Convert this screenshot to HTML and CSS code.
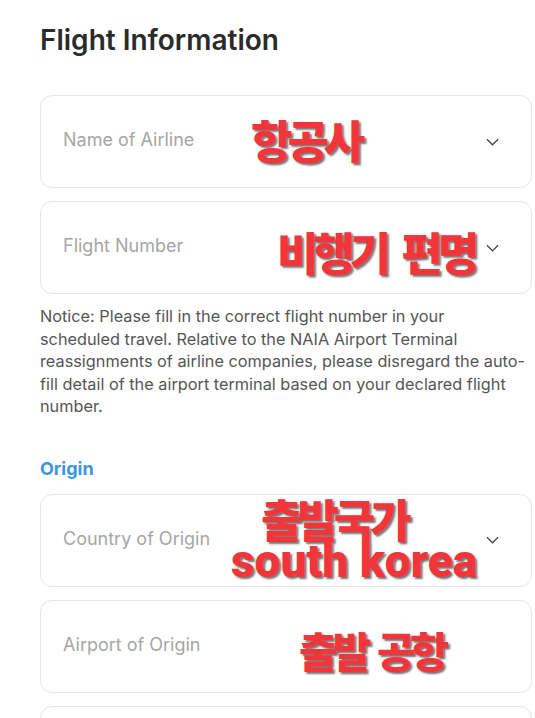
FILE: index.html
```html
<!DOCTYPE html>
<html lang="en">
<head>
    <meta charset="UTF-8">
    <meta name="viewport" content="width=device-width, initial-scale=1.0">
    <title>Flight Information</title>
    <link rel="stylesheet" href="styles.css">
</head>
<body>

    <div class="page">
        <h1 class="page-title">Flight Information</h1>

        <div class="field select">
            <span class="placeholder">Name of Airline</span>
            <svg class="chevron" viewBox="0 0 14 8"><polyline points="1,1 7,7 13,1"/></svg>
            <span class="note note-airline">항공사</span>
        </div>

        <div class="field select">
            <span class="placeholder">Flight Number</span>
            <svg class="chevron" viewBox="0 0 14 8"><polyline points="1,1 7,7 13,1"/></svg>
            <span class="note note-flight">비행기 편명</span>
        </div>

        <p class="notice">Notice: Please fill in the correct flight number in your scheduled travel. Relative to the NAIA Airport Terminal reassignments of airline companies, please disregard the auto-fill detail of the airport terminal based on your declared flight number.</p>

        <div class="section-label">Origin</div>

        <div class="field select">
            <span class="placeholder">Country of Origin</span>
            <svg class="chevron" viewBox="0 0 14 8"><polyline points="1,1 7,7 13,1"/></svg>
            <span class="note note-country">
                <span class="hangul">출발국가</span>
                <span class="latin">south korea</span>
            </span>
        </div>

        <div class="field">
            <span class="placeholder">Airport of Origin</span>
            <span class="note note-airport">출발 공항</span>
        </div>

        <div class="field"></div>
    </div>

</body>
</html>
```

FILE: styles.css
```css
:root {
    --border-color: #e6e6e6;
    --placeholder-color: #a6a6a6;
    --text-color: #555555;
    --title-color: #2b2b2b;
    --accent: #3b96e0;
    --note-red: #f2353b;
}

* {
    margin: 0;
    padding: 0;
    box-sizing: border-box;
}

body {
    font-family: Inter, 'Noto Sans', sans-serif;
    background-color: #ffffff;
    overflow: hidden;
}

.page {
    padding: 22px 3px 0 40px;
    display: flex;
    flex-direction: column;
}

.page-title {
    font-size: 28px;
    font-weight: 600;
    color: var(--title-color);
    line-height: 36px;
    margin-bottom: 37px;
}

/* Input boxes */
.field {
    position: relative;
    height: 93px;
    border: 1px solid var(--border-color);
    border-radius: 12px;
    display: flex;
    align-items: center;
    padding: 0 32px 0 22px;
    margin-bottom: 13px;
    flex-shrink: 0;
}

.placeholder {
    font-size: 18px;
    color: var(--placeholder-color);
    flex-grow: 1;
    margin-top: -4px;
}

.chevron {
    width: 13px;
    height: 8px;
    fill: none;
    stroke: #444444;
    stroke-width: 1.3;
}

.notice {
    font-size: 16.3px;
    line-height: 22.5px;
    color: var(--text-color);
    max-width: 485px;
    margin-top: -2px;
}

.section-label {
    font-size: 18px;
    font-weight: 700;
    color: var(--accent);
    margin: 40px 0 15px;
}

/* Red annotations drawn over the screenshot */
.note {
    position: absolute;
    font-family: 'Noto Sans CJK KR', sans-serif;
    font-weight: 900;
    color: var(--note-red);
    text-shadow: 2px 2px 2px rgba(0, 0, 0, 0.55);
    white-space: nowrap;
    letter-spacing: -5px;
    word-spacing: 10px;
    line-height: 1;
}

.note-airline {
    left: 210px;
    top: 21px;
    font-size: 45px;
}

.note-flight {
    left: 236px;
    top: 27px;
    font-size: 45px;
}

.note-country {
    left: 190px;
    top: 2px;
    display: flex;
    flex-direction: column;
    font-size: 45px;
    line-height: 44px;
}

.note-country .hangul {
    padding-left: 30px;
}

.note-country .latin {
    font-family: Roboto, 'Liberation Sans', sans-serif;
    font-weight: 900;
    letter-spacing: 0;
    word-spacing: 0;
    font-size: 46px;
    line-height: 40px;
}

.note-airport {
    left: 258px;
    top: 28px;
    font-size: 42px;
    word-spacing: 6px;
}
```
